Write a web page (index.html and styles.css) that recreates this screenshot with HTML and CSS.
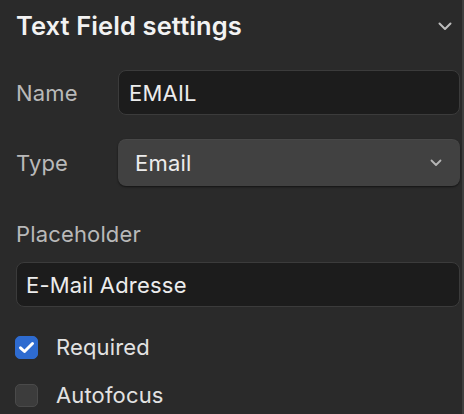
FILE: index.html
```html
<!DOCTYPE html>
<html>
<head>
<meta charset="utf-8">
<link rel="stylesheet" href="styles.css">
</head>
<body>
<div class="panel">
  <div class="header">
    <h2 class="title">Text Field settings</h2>
    <svg class="chev" width="14" height="9" viewBox="0 0 14 9"><path d="M1.5 1.5 L7 7 L12.5 1.5" fill="none" stroke="#bdbdbd" stroke-width="2" stroke-linecap="round" stroke-linejoin="round"/></svg>
  </div>
  <div class="row row-name">
    <span class="label">Name</span>
    <div class="input">EMAIL</div>
  </div>
  <div class="row row-type">
    <span class="label">Type</span>
    <div class="select">
      <span>Email</span>
      <svg class="chev-small" width="12" height="8" viewBox="0 0 12 8"><path d="M1.5 1.5 L6 6 L10.5 1.5" fill="none" stroke="#b5b5b5" stroke-width="1.8" stroke-linecap="round" stroke-linejoin="round"/></svg>
    </div>
  </div>
  <div class="label block-label">Placeholder</div>
  <div class="input input-full">E-Mail Adresse</div>
  <div class="check check-first">
    <span class="box checked">
      <svg width="17" height="13" viewBox="0 0 17 13"><path d="M2.5 6.8 L6.5 10.5 L14.5 2.5" fill="none" stroke="#ffffff" stroke-width="3" stroke-linecap="round" stroke-linejoin="round"/></svg>
    </span>
    <span class="check-label">Required</span>
  </div>
  <div class="check check-second">
    <span class="box"></span>
    <span class="check-label">Autofocus</span>
  </div>
</div>
</body>
</html>
```
FILE: styles.css
```css
html, body {
  margin: 0;
  padding: 0;
  background: #2a2a2a;
}
body {
  font-family: Inter, "Noto Sans", sans-serif;
  color: #e6e6e6;
  width: 464px;
  height: 414px;
  overflow: hidden;
}
.panel {
  width: 464px;
  height: 414px;
  box-sizing: border-box;
  padding-left: 16px;
  border-right: 2px solid #3e3e3e;
}
.panel > * {
  margin-right: 2px;
}
.header {
  height: 50px;
  display: flex;
  align-items: center;
  justify-content: space-between;
}
.title {
  margin: 0;
  font-size: 25.5px;
  font-weight: 600;
  color: #f2f2f2;
  letter-spacing: 0.1px;
}
.chev {
  margin-right: 8px;
  margin-top: 2px;
}
.row {
  display: flex;
  align-items: center;
}
.row-name {
  margin-top: 20px;
}
.row-type {
  margin-top: 24px;
}
.label {
  width: 102px;
  flex: none;
  font-size: 22px;
  letter-spacing: 0.15px;
  color: #b9b9b9;
}
.input {
  flex: 1;
  height: 45px;
  box-sizing: border-box;
  border: 1px solid #3b3b3b;
  border-radius: 8px;
  background: #1c1c1c;
  display: flex;
  align-items: center;
  padding-left: 10px;
  font-size: 22px;
  letter-spacing: 0.2px;
  color: #ececec;
}
.select {
  flex: 1;
  height: 47px;
  box-sizing: border-box;
  border-radius: 8px;
  background: #414141;
  box-shadow: 0 1px 2px rgba(0, 0, 0, 0.55), inset 0 1px 0 rgba(255, 255, 255, 0.04);
  display: flex;
  align-items: center;
  justify-content: space-between;
  padding-left: 17px;
  padding-right: 18px;
  font-size: 22px;
  letter-spacing: 0.2px;
  color: #ececec;
}
.block-label {
  margin-top: 36px;
  height: 24px;
  line-height: 24px;
}
.input-full {
  margin-top: 16px;
  padding-left: 9px;
}
.check {
  display: flex;
  align-items: center;
  gap: 18px;
  height: 23px;
}
.check-first {
  margin-top: 29px;
}
.check-second {
  margin-top: 25px;
}
.box {
  width: 23px;
  height: 23px;
  box-sizing: border-box;
  border-radius: 5px;
  background: #3c3c3c;
  border: 1px solid #4a4a4a;
  display: flex;
  align-items: center;
  justify-content: center;
  margin-left: -1px;
}
.box.checked {
  background: #2e6bd0;
  border-color: #2e6bd0;
}
.check-label {
  font-size: 22px;
  line-height: 23px;
  letter-spacing: 0.15px;
  color: #e2e2e2;
}
```
